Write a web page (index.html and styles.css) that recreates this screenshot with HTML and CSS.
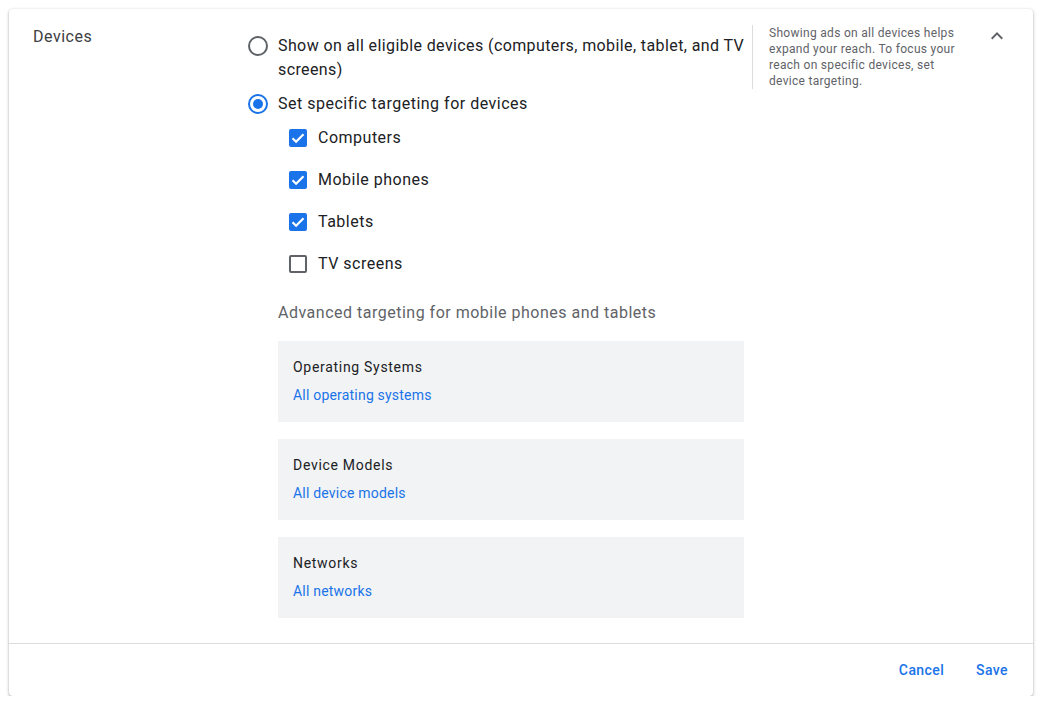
FILE: index.html
```html
<!DOCTYPE html>
<html lang="en">

<head>
    <meta charset="UTF-8">
    <meta name="viewport" content="width=device-width, initial-scale=1.0">
    <title>Devices</title>
    <link rel="stylesheet" href="styles.css">
</head>

<body>

    <!-- Devices panel -->
    <div class="card">

        <div class="panel">
            <div class="label">Devices</div>

            <div class="main">
                <!-- radios -->
                <label class="radio-row">
                    <span class="radio"></span>
                    <span class="radio-text">Show on all eligible devices (computers, mobile, tablet, and TV screens)</span>
                </label>
                <label class="radio-row radio-second">
                    <span class="radio checked"></span>
                    <span class="radio-text">Set specific targeting for devices</span>
                </label>

                <!-- checkboxes -->
                <div class="checks">
                    <label class="check-row"><span class="check on"><svg viewBox="0 0 18 18"><path d="M3.5 9.2l3.6 3.5 7.4-7.4" /></svg></span>Computers</label>
                    <label class="check-row"><span class="check on"><svg viewBox="0 0 18 18"><path d="M3.5 9.2l3.6 3.5 7.4-7.4" /></svg></span>Mobile phones</label>
                    <label class="check-row"><span class="check on"><svg viewBox="0 0 18 18"><path d="M3.5 9.2l3.6 3.5 7.4-7.4" /></svg></span>Tablets</label>
                    <label class="check-row"><span class="check"></span>TV screens</label>
                </div>

                <div class="advanced">
                    <div class="adv-title">Advanced targeting for mobile phones and tablets</div>

                    <div class="adv-box">
                        <div class="box-title">Operating Systems</div>
                        <a class="box-link">All operating systems</a>
                    </div>
                    <div class="adv-box">
                        <div class="box-title">Device Models</div>
                        <a class="box-link">All device models</a>
                    </div>
                    <div class="adv-box">
                        <div class="box-title">Networks</div>
                        <a class="box-link">All networks</a>
                    </div>
                </div>
            </div>

            <div class="help">
                Showing ads on all devices helps expand your reach. To focus your reach on specific devices, set device targeting.
            </div>

            <div class="collapse">
                <svg viewBox="0 0 24 24" width="24" height="24"><path d="M12 8l-6 6 1.41 1.41L12 10.83l4.59 4.58L18 14z" /></svg>
            </div>
        </div>

        <!-- footer -->
        <div class="footer">
            <button class="btn">Cancel</button>
            <button class="btn">Save</button>
        </div>
    </div>

</body>

</html>
```

FILE: styles.css
```css
body {
    margin: 0;
    background-color: white;
    font-family: Roboto, "Liberation Sans", sans-serif;
    color: #3c4043;
}

.card {
    margin: 9px 8px 0 9px;
    width: 1024px;
    height: 687px;
    background-color: white;
    border-radius: 4px;
    box-shadow: 0 1px 2px rgba(60, 64, 67, 0.3), 0 1px 3px 1px rgba(60, 64, 67, 0.15);
    display: flex;
    flex-direction: column;
}

.panel {
    display: flex;
    padding: 15px 24px 25px 24px;
    border-bottom: 1px solid #dadce0;
    flex: 1;
}

.label {
    width: 215px;
    padding-top: 1px;
    font-size: 16px;
    line-height: 24px;
    letter-spacing: 0.5px;
    color: #3c4043;
}

.main {
    width: 504px;
    padding-top: 10px;
}

.radio-row {
    display: flex;
    gap: 10px;
    font-size: 16px;
    line-height: 24px;
    letter-spacing: 0.4px;
    color: #202124;
}

.radio-second {
    margin-top: 10px;
}

.radio-second .radio-text {
    letter-spacing: 0.5px;
}

.radio {
    flex: none;
    width: 20px;
    height: 20px;
    margin-top: 2px;
    box-sizing: border-box;
    border: 2px solid #5f6368;
    border-radius: 50%;
    position: relative;
}

.radio.checked {
    border-color: #1a73e8;
}

.radio.checked::after {
    content: "";
    position: absolute;
    left: 3px;
    top: 3px;
    width: 10px;
    height: 10px;
    border-radius: 50%;
    background-color: #1a73e8;
}

.checks {
    display: flex;
    flex-direction: column;
    gap: 18px;
    margin-top: 10px;
    padding-left: 41px;
}

.check-row {
    display: flex;
    align-items: center;
    gap: 11px;
    font-size: 16px;
    line-height: 24px;
    letter-spacing: 0.5px;
    color: #202124;
}

.check {
    flex: none;
    width: 18px;
    height: 18px;
    box-sizing: border-box;
    border: 2px solid #5f6368;
    border-radius: 2px;
}

.check.on {
    border: none;
    background-color: #1a73e8;
}

.check svg {
    display: block;
    width: 18px;
    height: 18px;
    fill: none;
    stroke: white;
    stroke-width: 2.2;
}

.advanced {
    margin-top: 25px;
    padding-left: 30px;
    padding-right: 8px;
}

.adv-title {
    font-size: 16px;
    line-height: 24px;
    letter-spacing: 0.5px;
    color: #5f6368;
    margin-bottom: 16px;
}

.adv-box {
    background-color: #f1f3f4;
    padding: 16px 15px 17px 15px;
    margin-bottom: 17px;
    display: flex;
    flex-direction: column;
    gap: 8px;
}

.adv-box:last-child {
    margin-bottom: 0;
}

.box-title {
    font-size: 14px;
    line-height: 20px;
    letter-spacing: 0.7px;
    color: #202124;
}

.box-link {
    font-size: 14px;
    line-height: 20px;
    letter-spacing: 0.2px;
    color: #1a73e8;
}

.help {
    width: 192px;
    height: 64px;
    padding-left: 16px;
    border-left: 1px solid #dadce0;
    font-size: 12px;
    line-height: 16px;
    letter-spacing: 0.3px;
    color: #5f6368;
    margin-top: 1px;
}

.collapse {
    margin-left: auto;
}

.collapse svg {
    display: block;
    fill: #5f6368;
}

.footer {
    display: flex;
    justify-content: flex-end;
    align-items: center;
    gap: 16px;
    height: 53px;
    padding-right: 17px;
}

.btn {
    background: none;
    border: none;
    padding: 8px;
    font-family: Roboto, "Liberation Sans", sans-serif;
    font-size: 14px;
    font-weight: 500;
    letter-spacing: 0.4px;
    color: #1a73e8;
}
```
